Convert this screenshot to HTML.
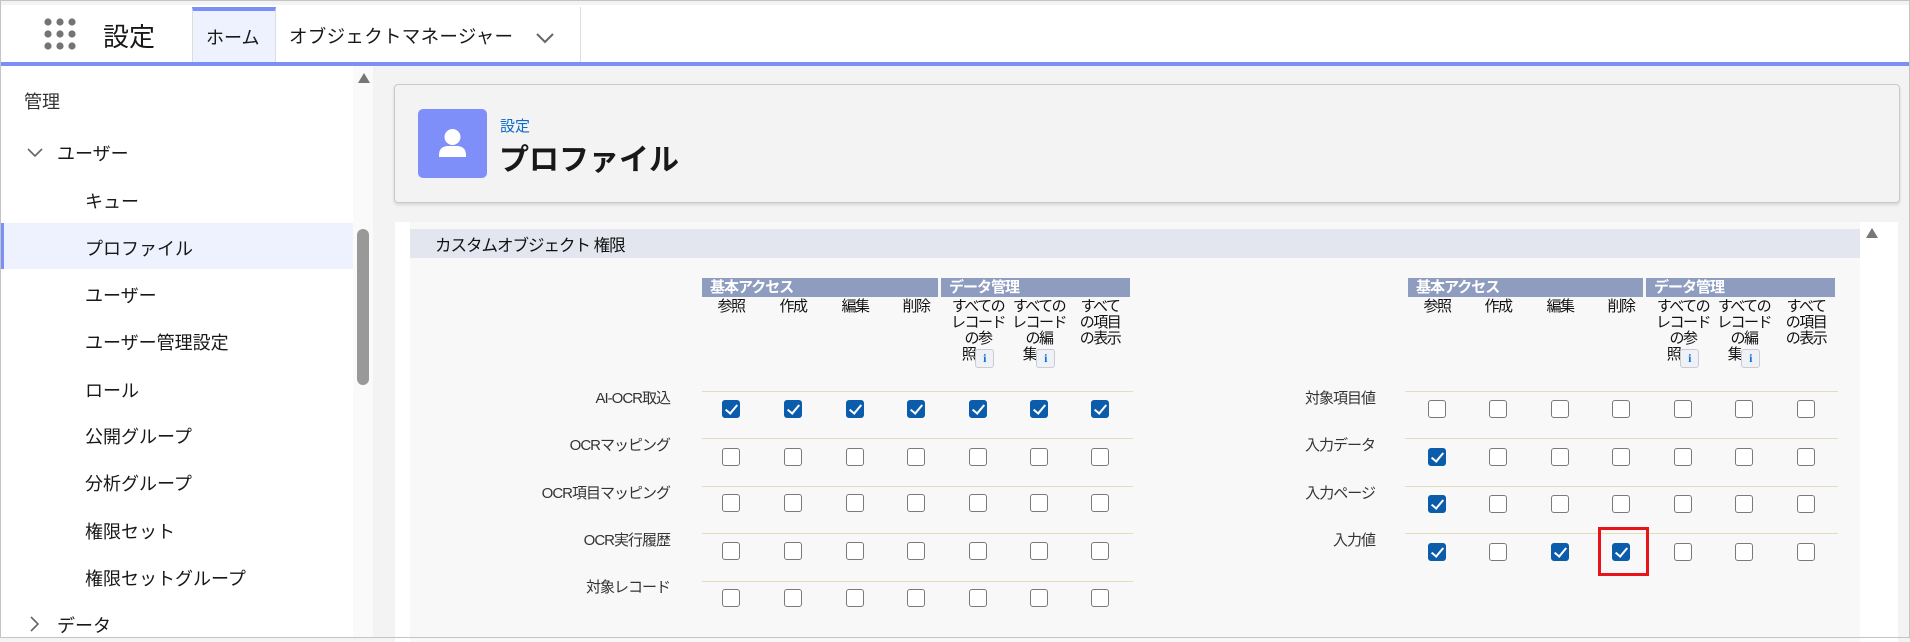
<!DOCTYPE html>
<html><head><meta charset="utf-8"><style>
*{margin:0;padding:0;box-sizing:border-box}
body{width:1910px;height:638px;overflow:hidden;background:#f3f3f3;font-family:"Liberation Sans","Noto Sans CJK JP",sans-serif;position:relative;color:#181818}
.a{position:absolute}
.side{font-size:18px;color:#181818;white-space:nowrap}
.cb{position:absolute;width:18px;height:18px;border-radius:3px;background:#fff;border:1.5px solid #7a7a7a}
.cb.on{background:#0b5cab;border-color:#0b5cab}
.cb.on::after{content:"";position:absolute;left:5px;top:1px;width:5px;height:10px;border:solid #fff;border-width:0 2.5px 2.5px 0;transform:rotate(40deg)}
.grp{position:absolute;top:278px;height:19px;background:#8e9dbf;color:#fff;font-size:15px;line-height:19px;padding-left:8px;letter-spacing:-1px;font-weight:bold}
.col{position:absolute;top:299px;width:64px;text-align:center;font-size:15px;line-height:16px;letter-spacing:-1.5px;color:#111}
.info{display:inline-block;width:19px;height:19px;border:1px solid #c9ccd3;border-radius:3px;background:#eef1f6;color:#1a6fd6;font:bold 12px "Liberation Serif",serif;line-height:17px;text-align:center;vertical-align:top;letter-spacing:0;margin-top:2px}
.lab{position:absolute;font-size:15px;color:#333;text-align:right;letter-spacing:-1px}
.line{position:absolute;height:1px;background:#e5dcbc}
</style></head><body>
<div class="a" style="left:0;top:0;width:1910px;height:638px;border:1px solid #c4c4c4;z-index:10;pointer-events:none"></div>
<div class="a" style="left:0;top:0;width:1910px;height:62px;background:#fff;border-top:5px solid #f3f3f3"></div>
<div class="a" style="left:0;top:62px;width:1910px;height:4px;background:#7b8ff8"></div>
<svg class="a" style="left:44px;top:18px" width="34" height="34"><g fill="#747474"><circle cx="4" cy="4" r="3.6"/><circle cx="16" cy="4" r="3.6"/><circle cx="28" cy="4" r="3.6"/><circle cx="4" cy="16" r="3.6"/><circle cx="16" cy="16" r="3.6"/><circle cx="28" cy="16" r="3.6"/><circle cx="4" cy="28" r="3.6"/><circle cx="16" cy="28" r="3.6"/><circle cx="28" cy="28" r="3.6"/></g></svg>
<div class="a" style="left:103px;top:17px;font-size:26px;color:#181818">設定</div>
<div class="a" style="left:192px;top:7px;width:84px;height:55px;background:#eef1fe;border-top:4px solid #7b8ff8;border-left:1px solid #ddd;border-right:1px solid #ddd"></div>
<div class="a" style="left:206px;top:24px;font-size:18px;color:#181818">ホーム</div>
<div class="a" style="left:580px;top:7px;width:1px;height:55px;background:#ddd"></div>
<div class="a" style="left:289px;top:23px;font-size:18.5px;color:#181818;letter-spacing:0.3px">オブジェクトマネージャー</div>
<svg class="a" style="left:535px;top:32px" width="20" height="12"><path d="M2 2 L10 10 L18 2" fill="none" stroke="#666" stroke-width="2"/></svg>
<div class="a" style="left:0;top:66px;width:353px;height:572px;background:#fff"></div>
<div class="a" style="left:353px;top:66px;width:20px;height:572px;background:#fafafa"></div>
<svg class="a" style="left:356px;top:72px" width="16" height="12"><path d="M8 1 L14 11 L2 11Z" fill="#777"/></svg>
<div class="a" style="left:357px;top:229px;width:12px;height:156px;background:#999;border-radius:6px"></div>
<div class="a" style="left:0;top:223px;width:353px;height:46px;background:#eef1fe;border-left:4px solid #7b8ff8"></div>
<div class="a side" style="left:24px;top:88px;color:#333">管理</div>
<svg class="a" style="left:27px;top:148px" width="16" height="10"><path d="M1 1 L8 8 L15 1" fill="none" stroke="#666" stroke-width="1.6"/></svg>
<div class="a side" style="left:57px;top:140px">ユーザー</div>
<div class="a side" style="left:85px;top:188px">キュー</div>
<div class="a side" style="left:85px;top:235px">プロファイル</div>
<div class="a side" style="left:85px;top:282px">ユーザー</div>
<div class="a side" style="left:85px;top:329px">ユーザー管理設定</div>
<div class="a side" style="left:85px;top:377px">ロール</div>
<div class="a side" style="left:85px;top:423px">公開グループ</div>
<div class="a side" style="left:85px;top:470px">分析グループ</div>
<div class="a side" style="left:85px;top:518px">権限セット</div>
<div class="a side" style="left:85px;top:565px">権限セットグループ</div>
<svg class="a" style="left:30px;top:616px" width="10" height="16"><path d="M1 1 L8 8 L1 15" fill="none" stroke="#666" stroke-width="1.6"/></svg>
<div class="a side" style="left:57px;top:612px">データ</div>
<div class="a" style="left:394px;top:84px;width:1506px;height:119px;background:#f3f3f3;border:1px solid #c9c9c9;border-radius:4px;box-shadow:0 2px 3px rgba(0,0,0,.12)"></div>
<div class="a" style="left:418px;top:109px;width:69px;height:69px;background:#7f8ff9;border-radius:5px"></div>
<svg class="a" style="left:418px;top:109px" width="69" height="69"><circle cx="34.5" cy="28" r="8" fill="#fff"/><path d="M21 46 Q21 38 29 37 L40 37 Q48 38 48 46 L48 48 L21 48Z" fill="#fff"/></svg>
<div class="a" style="left:500px;top:115px;font-size:15px;color:#0b6bcb">設定</div>
<div class="a" style="left:499px;top:135px;font-size:30px;font-weight:bold;color:#181818">プロファイル</div>
<div class="a" style="left:395px;top:222px;width:1465px;height:420px;background:#f8f8f8;border-left:15px solid #fff"></div>
<div class="a" style="left:1860px;top:222px;width:38px;height:420px;background:#fff"></div>
<svg class="a" style="left:1864px;top:227px" width="16" height="12"><path d="M8 1 L14 11 L2 11Z" fill="#777"/></svg>
<div class="a" style="left:410px;top:229px;width:1450px;height:29px;background:#e3e6ef"></div>
<div class="a" style="left:435px;top:232px;font-size:16.5px;color:#111;letter-spacing:-1px">カスタムオブジェクト 権限</div>

<div class="grp" style="left:702px;width:236px">基本アクセス</div>
<div class="grp" style="left:941px;width:189px">データ管理</div>
<div class="col" style="left:699px">参照</div>
<div class="col" style="left:761px">作成</div>
<div class="col" style="left:823px">編集</div>
<div class="col" style="left:884px">削除</div>
<div class="col" style="left:946px">すべての<br>レコード<br>の参<br>照<span class="info">i</span></div>
<div class="col" style="left:1007px">すべての<br>レコード<br>の編<br>集<span class="info">i</span></div>
<div class="col" style="left:1068px">すべて<br>の項目<br>の表示</div>
<div class="grp" style="left:1408px;width:235px">基本アクセス</div>
<div class="grp" style="left:1646px;width:189px">データ管理</div>
<div class="col" style="left:1405px">参照</div>
<div class="col" style="left:1466px">作成</div>
<div class="col" style="left:1528px">編集</div>
<div class="col" style="left:1589px">削除</div>
<div class="col" style="left:1651px">すべての<br>レコード<br>の参<br>照<span class="info">i</span></div>
<div class="col" style="left:1712px">すべての<br>レコード<br>の編<br>集<span class="info">i</span></div>
<div class="col" style="left:1774px">すべて<br>の項目<br>の表示</div>

<div class="lab" style="left:470px;width:200px;top:387px">AI-OCR取込</div>
<div class="lab" style="left:470px;width:200px;top:434px">OCRマッピング</div>
<div class="lab" style="left:470px;width:200px;top:482px">OCR項目マッピング</div>
<div class="lab" style="left:470px;width:200px;top:529px">OCR実行履歴</div>
<div class="lab" style="left:470px;width:200px;top:576px">対象レコード</div>
<div class="lab" style="left:1175px;width:200px;top:387px">対象項目値</div>
<div class="lab" style="left:1175px;width:200px;top:434px">入力データ</div>
<div class="lab" style="left:1175px;width:200px;top:482px">入力ページ</div>
<div class="lab" style="left:1175px;width:200px;top:529px">入力値</div>

<div id="grid"></div>
<div class="a" style="left:1598px;top:527px;width:51px;height:49px;border:3px solid #e8141a"></div>
<script>
var g=document.getElementById('grid'),h='';
var lx=[731,793,855,916,978,1039,1100],rx=[1437,1498,1560,1621,1683,1744,1806];
var ly=[409,457,503,551,598],ry=[409,457,504,552];
var lines=[391,438,486,533,581];
lines.forEach(function(y,i){h+='<div class="line" style="left:702px;width:431px;top:'+y+'px"></div>';if(i<4)h+='<div class="line" style="left:1405px;width:433px;top:'+y+'px"></div>';});
var L=[[1,1,1,1,1,1,1],[0,0,0,0,0,0,0],[0,0,0,0,0,0,0],[0,0,0,0,0,0,0],[0,0,0,0,0,0,0]];
var R=[[0,0,0,0,0,0,0],[1,0,0,0,0,0,0],[1,0,0,0,0,0,0],[1,0,1,1,0,0,0]];
ly.forEach(function(y,r){lx.forEach(function(x,c){h+='<div class="cb'+(L[r][c]?' on':'')+'" style="left:'+(x-9)+'px;top:'+(y-9)+'px"></div>';});});
ry.forEach(function(y,r){rx.forEach(function(x,c){h+='<div class="cb'+(R[r][c]?' on':'')+'" style="left:'+(x-9)+'px;top:'+(y-9)+'px"></div>';});});
g.innerHTML=h;
</script>
</body></html>
